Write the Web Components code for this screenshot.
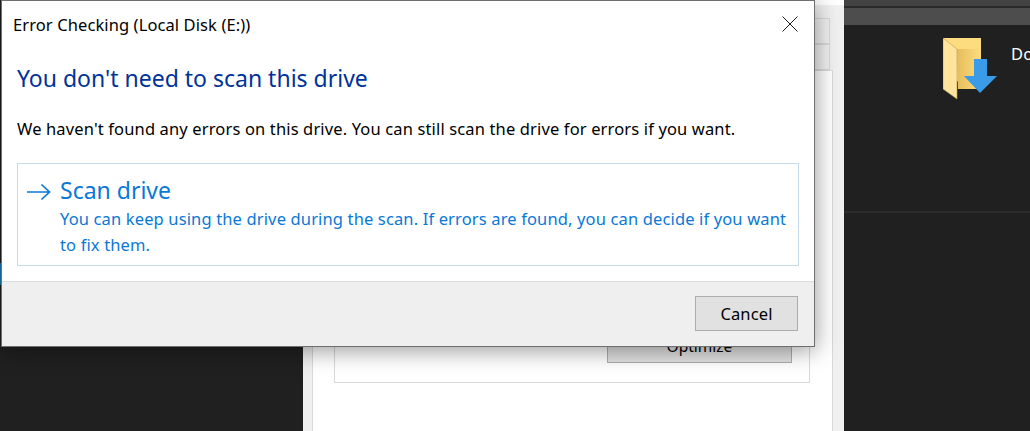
<!DOCTYPE html>
<html>
<head>
<meta charset="utf-8">
<title>Error Checking</title>
<style>
  html, body { margin: 0; height: 100%; overflow: hidden; background: #202020; }
  body { font-family: "Noto Sans", "Liberation Sans", sans-serif; }
</style>
</head>
<body>
<desk-top>
  <left-strip slot="left"></left-strip>
  <props-window slot="middle">
    <dialog-button wide>Optimize</dialog-button>
  </props-window>
  <explorer-pane slot="right">
    <folder-tile>Downloads</folder-tile>
  </explorer-pane>
  <error-dialog slot="dialog" title-text="Error Checking (Local Disk (E:))" heading="You don't need to scan this drive">
    <span slot="message">We haven't found any errors on this drive. You can still scan the drive for errors if you want.</span>
    <command-link label="Scan drive" slot="command">You can keep using the drive during the scan. If errors are found, you can decide if you want to fix them.</command-link>
    <dialog-button slot="buttons">Cancel</dialog-button>
  </error-dialog>
</desk-top>

<script>
class DeskTop extends HTMLElement {
  constructor() {
    super();
    this.attachShadow({ mode: 'open' }).innerHTML = `
      <style>
        :host { display: grid; grid-template-columns: 303px 541px 1fr; height: 431px; position: relative; overflow: hidden; background: #202020; }
        .dialog { position: absolute; left: 1px; top: 0; }
      </style>
      <slot name="left"></slot>
      <slot name="middle"></slot>
      <slot name="right"></slot>
      <div class="dialog"><slot name="dialog"></slot></div>`;
  }
}

class LeftStrip extends HTMLElement {
  constructor() {
    super();
    this.attachShadow({ mode: 'open' }).innerHTML = `
      <style>
        :host { display: block; padding-top: 263px; }
        div { width: 2px; height: 22px; background: #1a7fb5; }
      </style>
      <div></div>`;
  }
}

class PropsWindow extends HTMLElement {
  constructor() {
    super();
    this.attachShadow({ mode: 'open' }).innerHTML = `
      <style>
        :host { display: block; background: linear-gradient(#fff 5px, #f0f0f0 5px); padding: 0 11px 0 9px; height: 431px; box-sizing: border-box; }
        .tabs { height: 70px; display: flex; flex-direction: column; align-items: flex-end; padding-top: 18px; box-sizing: border-box; }
        .tab { width: 15px; height: 26px; box-sizing: border-box; border: 1px solid #d9d9d9; border-left: 0; margin-right: 3px; }
        .page { background: #fff; border: 1px solid #d9d9d9; border-bottom: 0; height: 361px; box-sizing: border-box; padding: 0 22px 0 21px; }
        .group { margin-top: 241px; height: 71px; border: 1px solid #d9d9d9; border-top: 0; box-sizing: border-box; display: flex; justify-content: flex-end; align-items: flex-end; padding: 0 17px 19px 0; }
        ::slotted(dialog-button) { font-size: 15.5px; letter-spacing: 0; }
      </style>
      <div class="tabs"><div class="tab"></div><div class="tab"></div></div>
      <div class="page"><div class="group"><slot></slot></div></div>`;
  }
}

class ExplorerPane extends HTMLElement {
  constructor() {
    super();
    this.attachShadow({ mode: 'open' }).innerHTML = `
      <style>
        :host { display: block; height: 431px; background: #202020; overflow: hidden; }
        .top { height: 6px; background: #434343; border-bottom: 2px solid #2a2a2a; }
        .bar { height: 17px; background: #4d4d4d; }
        .tiles { height: 188px; padding: 12px 0 0 99px; box-sizing: border-box; border-bottom: 2px solid #2b2b2b; }
      </style>
      <div class="top"></div>
      <div class="bar"></div>
      <div class="tiles"><slot></slot></div>`;
  }
}

class FolderTile extends HTMLElement {
  constructor() {
    super();
    this.attachShadow({ mode: 'open' }).innerHTML = `
      <style>
        :host { display: flex; align-items: flex-start; gap: 13px; color: #fff; font-size: 16.5px; letter-spacing: .14px; white-space: nowrap; }
        svg { display: block; flex: none; }
        span { line-height: 20px; margin-top: 7px; }
      </style>
      <svg width="55" height="64" viewBox="0 0 55 64">
        <defs><linearGradient id="back" x1="0" x2="1" y1="0" y2="0"><stop offset="0" stop-color="#e6bd5c"/><stop offset="1" stop-color="#fddc80"/></linearGradient></defs>
        <path d="M1 1H38V52H15V44L1 52Z" fill="#fddc80"/>
        <path d="M14 12H38V52H15Z" fill="url(#back)"/>
        <path d="M0 1L14 12V62L0 52Z" fill="#fee49c" stroke="#b89a50" stroke-width="0.6"/>
        <path d="M31 22H44V39H54L37 56L21 39H31Z" fill="#3a9be8"/>
      </svg>
      <span><slot></slot></span>`;
  }
}

class ErrorDialog extends HTMLElement {
  constructor() {
    super();
    this.attachShadow({ mode: 'open' }).innerHTML = `
      <style>
        :host { display: block; width: 814px; height: 347px; box-sizing: border-box; background: #fff; border: 1px solid #6f6f6f; box-shadow: 0 3px 22px rgba(0,0,0,.42); color: #000; font-size: 16.5px; letter-spacing: .14px; }
        .title { height: 45px; display: flex; align-items: center; justify-content: space-between; padding: 1px 16px 0 11px; box-sizing: border-box; }
        .title span { letter-spacing: .1px; }
        .body { height: 235px; padding: 0 15px; box-sizing: border-box; }
        h1 { margin: 0; padding-top: 16px; font-size: 23px; font-weight: 400; letter-spacing: 0; color: #003399; line-height: 32px; }
        .msg { line-height: 22px; margin-top: 24px; }
        .cmd { margin-top: 23px; }
        .foot { height: 65px; box-sizing: border-box; background: #efefef; border-top: 1px solid #dcdcdc; display: flex; justify-content: flex-end; padding: 14px 16px 0 0; }
        svg { display: block; }
      </style>
      <div class="title"><span id="t"></span>
        <svg width="16" height="16" viewBox="0 0 16 16"><path d="M0.5 0.5L15.5 15.5M15.5 0.5L0.5 15.5" stroke="#1a1a1a" stroke-width="1" fill="none"/></svg>
      </div>
      <div class="body">
        <h1 id="h"></h1>
        <div class="msg"><slot name="message"></slot></div>
        <div class="cmd"><slot name="command"></slot></div>
      </div>
      <div class="foot"><slot name="buttons"></slot></div>`;
  }
  connectedCallback() {
    this.shadowRoot.getElementById('t').textContent = this.getAttribute('title-text');
    this.shadowRoot.getElementById('h').textContent = this.getAttribute('heading');
  }
}

class CommandLink extends HTMLElement {
  constructor() {
    super();
    this.attachShadow({ mode: 'open' }).innerHTML = `
      <style>
        :host { display: flex; height: 103px; box-sizing: border-box; border: 1px solid #c5dbec; color: #0a78d7; padding: 10px 8px 0 9px; }
        svg { flex: none; margin: 9px 9px 0 0; display: block; }
        .label { font-size: 23px; line-height: 32px; letter-spacing: 0; }
        .note { line-height: 26px; }
      </style>
      <svg width="24" height="18" viewBox="0 0 24 18"><path d="M0 9H23M14.5 1.5L22.5 9L14.5 16.5" stroke="#0a78d7" stroke-width="1.7" fill="none"/></svg>
      <div>
        <div class="label" id="l"></div>
        <div class="note"><slot></slot></div>
      </div>`;
  }
  connectedCallback() {
    this.shadowRoot.getElementById('l').textContent = this.getAttribute('label');
  }
}

class DialogButton extends HTMLElement {
  constructor() {
    super();
    this.attachShadow({ mode: 'open' }).innerHTML = `
      <style>
        :host { display: flex; align-items: center; justify-content: center; width: 103px; height: 35px; box-sizing: border-box; background: #e1e1e1; border: 1px solid #adadad; font-size: 16.5px; letter-spacing: .14px; color: #000; }
        :host([wide]) { width: 185px; }
      </style>
      <slot></slot>`;
  }
}

customElements.define('desk-top', DeskTop);
customElements.define('left-strip', LeftStrip);
customElements.define('props-window', PropsWindow);
customElements.define('explorer-pane', ExplorerPane);
customElements.define('folder-tile', FolderTile);
customElements.define('error-dialog', ErrorDialog);
customElements.define('command-link', CommandLink);
customElements.define('dialog-button', DialogButton);
</script>
</body>
</html>
